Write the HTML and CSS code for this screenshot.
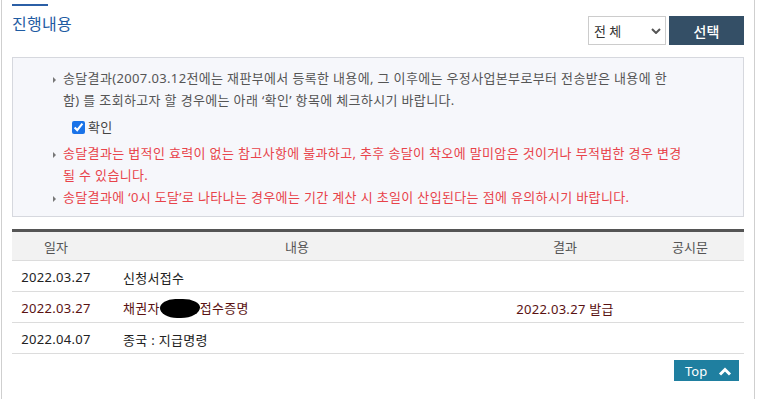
FILE: index.html
```html
<!DOCTYPE html>
<html lang="ko">
<head>
<meta charset="utf-8">
<title>진행내용</title>
<link rel="stylesheet" href="styles.css">
</head>
<body>
<div class="page">
  <div class="head">
    <div class="title-wrap">
      <div class="title-bar"></div>
      <h2 class="title">진행내용</h2>
    </div>
    <div class="tools">
      <div class="select-wrap">
        <select class="select"><option>전 체</option></select>
        <svg class="chev" width="10" height="6" viewBox="0 0 10 6"><path d="M1 1l4 4 4-4" fill="none" stroke="#555" stroke-width="2"/></svg>
      </div>
      <button class="btn-select">선택</button>
    </div>
  </div>

  <div class="info">
    <ul class="notes">
      <li class="note">송달결과(2007.03.12전에는 재판부에서 등록한 내용에, 그 이후에는 우정사업본부로부터 전송받은 내용에 한함) 를 조회하고자 할 경우에는 아래 ‘확인’ 항목에 체크하시기 바랍니다.</li>
    </ul>
    <label class="check"><input type="checkbox" checked> 확인</label>
    <ul class="notes red">
      <li class="note">송달결과는 법적인 효력이 없는 참고사항에 불과하고, 추후 송달이 착오에 말미암은 것이거나 부적법한 경우 변경 될 수 있습니다.</li>
      <li class="note">송달결과에 ‘0시 도달’로 나타나는 경우에는 기간 계산 시 초일이 산입된다는 점에 유의하시기 바랍니다.</li>
    </ul>
  </div>

  <table class="grid">
    <colgroup>
      <col class="c-date"><col class="c-content"><col class="c-result"><col class="c-notice">
    </colgroup>
    <thead>
      <tr><th>일자</th><th>내용</th><th>결과</th><th>공시문</th></tr>
    </thead>
    <tbody>
      <tr><td class="date">2022.03.27</td><td class="content">신청서접수</td><td class="result"></td><td></td></tr>
      <tr class="hl"><td class="date">2022.03.27</td><td class="content">채권자<span class="redact"></span>접수증명</td><td class="result">2022.03.27 발급</td><td></td></tr>
      <tr><td class="date">2022.04.07</td><td class="content">종국 : 지급명령</td><td class="result"></td><td></td></tr>
    </tbody>
  </table>

  <div class="foot">
    <a class="top-btn" href="#">Top
      <svg width="14" height="10" viewBox="0 0 14 10"><path d="M2 8.5l5-5 5 5" fill="none" stroke="#fff" stroke-width="3"/></svg>
    </a>
  </div>
</div>
</body>
</html>
```

FILE: styles.css
```css
* { box-sizing: border-box; }
html, body { margin: 0; padding: 0; background: #fff; }
body {
  font-family: "Noto Sans", "Noto Sans CJK KR", sans-serif;
  font-size: 13px;
  color: #222;
}
.page {
  margin-left: 1px;
  width: 754px;
  height: 399px;
  border-left: 1px solid #cfcfcf;
  border-right: 1px solid #cfcfcf;
  padding: 4px 10px 0 10px;
}
.head {
  display: flex;
  justify-content: space-between;
  align-items: flex-start;
}
.title-bar {
  width: 36px;
  height: 2px;
  background: #2b5fa6;
}
.title {
  margin: 7px 0 0;
  font-size: 16px;
  line-height: 22px;
  font-weight: normal;
  color: #1f5ca3;
  letter-spacing: 0.3px;
}
.tools {
  display: flex;
  gap: 3px;
  margin-top: 12px;
}
.select-wrap { position: relative; }
.select {
  appearance: none;
  -webkit-appearance: none;
  width: 78px;
  height: 29px;
  border: 1px solid #cccccc;
  border-radius: 0;
  background: #fff;
  font-family: inherit;
  font-size: 13px;
  color: #333;
  padding: 0 0 0 5px;
}
.chev {
  position: absolute;
  right: 5px;
  top: 12px;
  pointer-events: none;
}
.btn-select {
  width: 75px;
  height: 29px;
  border: 0;
  background: #344f66;
  color: #fff;
  font-family: inherit;
  font-size: 14px;
  font-weight: 500;
  padding: 0;
}
.info {
  margin-top: 12px;
  background: #f6f7fb;
  border: 1px solid #d6d8de;
  padding: 9px 60px 8px 40px;
  color: #555;
  line-height: 22px;
  letter-spacing: 0.35px;
}
.notes {
  list-style: none;
  margin: 0;
  padding: 0;
  word-break: break-all;
}
.note {
  padding-left: 10px;
  position: relative;
}
.note::before {
  content: "";
  position: absolute;
  left: 0;
  top: 10px;
  border-left: 3px solid #777;
  border-top: 3px solid transparent;
  border-bottom: 3px solid transparent;
}
.red { color: #e8434a; }
.check {
  display: flex;
  align-items: center;
  margin: 5px 0 4px 19px;
  color: #444;
}
.check input {
  margin: 0 3px 0 0;
  width: 13px;
  height: 13px;
  accent-color: #1a73e8;
}
.grid {
  width: 100%;
  margin-top: 12px;
  border-collapse: collapse;
  border-top: 3px solid #555;
  table-layout: fixed;
}
.c-date { width: 88px; }
.c-content { width: 394px; }
.c-result { width: 142px; }
.c-notice { width: 108px; }
.grid th {
  height: 30px;
  background: #f2f2f2;
  font-weight: normal;
  color: #555;
  border-bottom: 1px solid #dcdcdc;
  padding: 1px 0 0;
}
.grid td {
  height: 31px;
  border-bottom: 1px solid #dcdcdc;
  padding: 2px 0 0;
  white-space: nowrap;
  letter-spacing: 0.3px;
}
.grid .date { text-align: center; }
.grid .content { padding-left: 23px; }
.grid .result { text-align: center; }
.hl td { color: #5a1212; }
.redact {
  display: inline-block;
  width: 40px;
  height: 19px;
  background: #000;
  border-radius: 40% 45% 50% 45% / 50% 45% 60% 55%;
  vertical-align: middle;
  margin-top: -2px;
}
.foot {
  display: flex;
  justify-content: flex-end;
  margin-top: 6px;
  padding-right: 5px;
}
.top-btn {
  display: flex;
  align-items: center;
  justify-content: space-between;
  width: 65px;
  height: 21px;
  padding: 0 7px 0 11px;
  background: #1f7fa0;
  color: #fff;
  text-decoration: none;
  font-size: 13px;
}
```
